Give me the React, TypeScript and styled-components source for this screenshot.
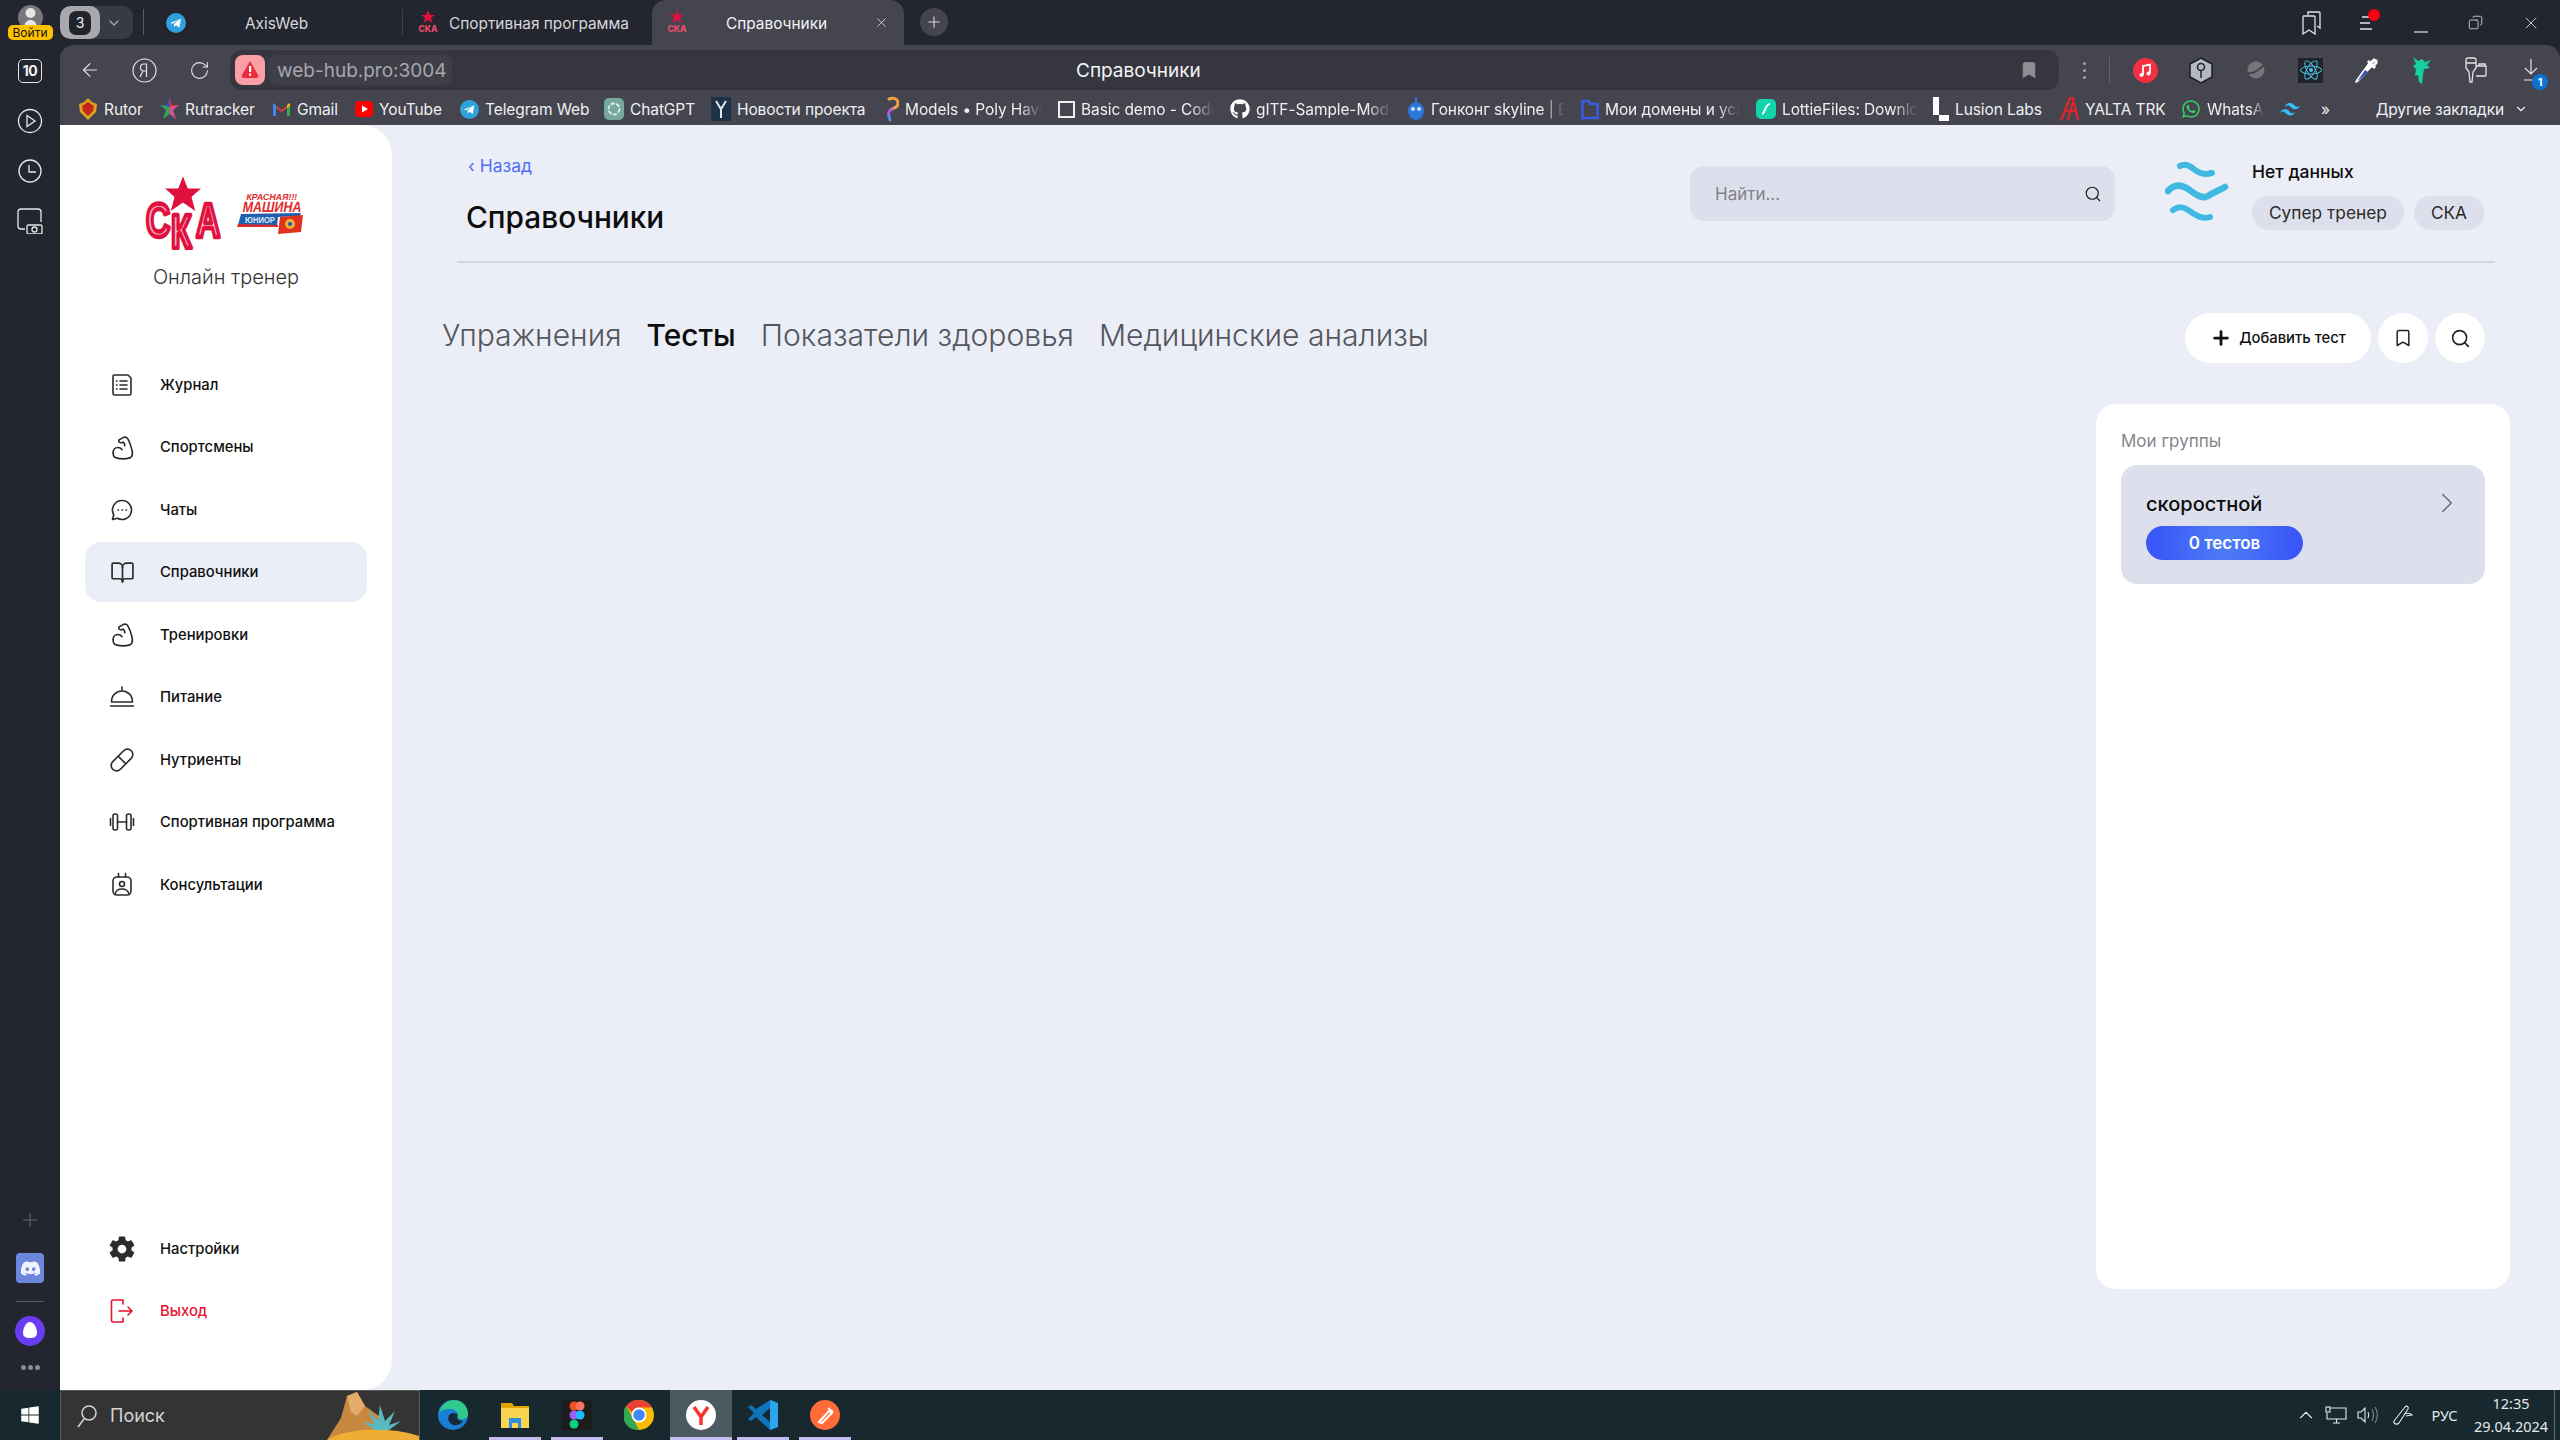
import React from 'react';
import styled, { createGlobalStyle } from 'styled-components';
import { BookOpen, Pill, Search, Plus, ChevronRight, ChevronDown, ChevronUp, X, ArrowLeft, RotateCw, Bookmark, Copy } from 'lucide-react';
import { FaGithub, FaWhatsapp, FaDiscord, FaReact, FaWindows } from 'react-icons/fa';
import { IoSettingsSharp } from 'react-icons/io5';

const GlobalStyle = createGlobalStyle`
  html, body {
    margin: 0;
    width: 2560px;
    height: 1440px;
    overflow: hidden;
    background: #23252f;
    font-family: Inter, "Noto Sans", sans-serif;
  }
  * { box-sizing: border-box; }
  svg { display: block; flex-shrink: 0; }
`;

const Screen = styled.div`
  width: 2560px;
  height: 1440px;
  display: grid;
  grid-template-rows: 1390px 50px;
`;

const Desktop = styled.div`
  display: flex;
  min-height: 0;
`;

/* left browser rail */
const Rail = styled.div`
  width: 60px;
  background: #23252f;
  display: flex;
  flex-direction: column;
  align-items: center;
  padding: 5px 0 20px;
`;

const Avatar = styled.div`
  position: relative;
  width: 25px;
  height: 25px;
  border-radius: 50%;
  background: #77777b;
  display: flex;
  justify-content: center;
  margin-bottom: 28px;
  overflow: visible;
`;

const LoginBadge = styled.span`
  position: absolute;
  left: -10px;
  top: 20px;
  width: 45px;
  height: 15px;
  border-radius: 5px;
  background: #fdc100;
  color: #111;
  font-size: 12px;
  line-height: 15px;
  text-align: center;
`;

const RailButton = styled.div<{ $mb?: number }>`
  width: 26px;
  height: 26px;
  display: flex;
  align-items: center;
  justify-content: center;
  color: #e8e8ea;
  margin-bottom: ${(p) => p.$mb ?? 24}px;
`;

const TenBox = styled.span`
  width: 24px;
  height: 24px;
  border: 1.5px solid #e8e8ea;
  border-radius: 5px;
  color: #f2f2f2;
  font-size: 14px;
  font-weight: 700;
  line-height: 21px;
  text-align: center;
  letter-spacing: -0.5px;
`;

const RailBottom = styled.div`
  margin-top: auto;
  display: flex;
  flex-direction: column;
  align-items: center;
  color: #6f7078;
`;

const DiscordBubble = styled.div`
  position: relative;
  width: 28px;
  height: 30px;
  margin: 22px 0 18px;
  border-radius: 4px;
  background: #6b86da;
  display: flex;
  align-items: center;
  justify-content: center;
  color: #f0f2ff;
`;

const RailRule = styled.div`
  width: 28px;
  height: 1px;
  background: #5a5b63;
  margin: 0 0 14px;
`;

const RailDots = styled.div`
  display: flex;
  gap: 2px;
  margin-top: 19px;

  span {
    width: 5px;
    height: 5px;
    border-radius: 50%;
    background: #8b8c93;
  }
`;

/* browser chrome */
const Browser = styled.div`
  flex: 1;
  min-width: 0;
  display: flex;
  flex-direction: column;
`;

const TabStrip = styled.div`
  height: 45px;
  background: #23252f;
  display: flex;
  align-items: stretch;
  color: #e6e6e8;
`;

const CounterPill = styled.div`
  width: 73px;
  height: 33px;
  margin-top: 6px;
  border-radius: 10px;
  background: #383a44;
  display: flex;
  align-items: center;
  overflow: hidden;
  color: #a9a9ad;
`;

const CounterValue = styled.div`
  width: 40px;
  height: 33px;
  background: #a9a9ad;
  border-radius: 10px;
  display: flex;
  align-items: center;
  justify-content: center;
  margin-right: 6px;

  span {
    width: 22px;
    height: 24px;
    border-radius: 7px;
    background: #22242c;
    color: #f1f1f1;
    font-size: 14px;
    line-height: 24px;
    text-align: center;
  }
`;

const StripRule = styled.div`
  width: 1px;
  height: 26px;
  margin: 9px 6px 0 10px;
  background: #595a62;
`;

const Tab = styled.div<{ $w: number; $active?: boolean; $rule?: boolean }>`
  width: ${(p) => p.$w}px;
  display: flex;
  align-items: center;
  padding-left: ${(p) => (p.$rule ? 16 : 14)}px;
  font-size: 15.4px;
  color: ${(p) => (p.$active ? '#f4f4f5' : '#d7d7da')};
  background: ${(p) => (p.$active ? '#44454f' : 'transparent')};
  border-radius: ${(p) => (p.$active ? '14px 14px 0 0' : '0')};
  white-space: nowrap;
  position: relative;

  &::after {
    content: '';
    display: ${(p) => (p.$rule ? 'block' : 'none')};
    position: absolute;
    right: 0;
    top: 9px;
    width: 1px;
    height: 26px;
    background: #3f4049;
  }
`;

const TabTitle = styled.span<{ $ml: number }>`
  margin-left: ${(p) => p.$ml}px;
  padding-top: 1px;
`;

const TabClose = styled.span`
  margin-left: 47px;
  color: #d0d0d4;
  display: flex;
`;

const NewTab = styled.div`
  width: 28px;
  height: 28px;
  margin: 8px 0 0 16px;
  border-radius: 50%;
  background: #44454f;
  display: flex;
  align-items: center;
  justify-content: center;
  color: #d6d6d9;
`;

const WindowControls = styled.div`
  margin-left: auto;
  padding-right: 2px;
  display: flex;
  align-items: center;
`;

const ChromeButton = styled.div<{ $color?: string }>`
  position: relative;
  width: 55px;
  height: 40px;
  display: flex;
  align-items: center;
  justify-content: center;
  color: ${(p) => p.$color ?? '#e4e4e6'};
`;

const RedDot = styled.span`
  position: absolute;
  left: 30px;
  top: 6px;
  width: 12px;
  height: 12px;
  border-radius: 50%;
  background: #f5000f;
`;

const DownloadBadge = styled.span`
  position: absolute;
  left: 29px;
  top: 24px;
  width: 16px;
  height: 16px;
  border-radius: 50%;
  background: #0b74d1;
  color: #fff;
  font-size: 11px;
  font-weight: 700;
  line-height: 16px;
  text-align: center;
`;

const Toolbar = styled.div`
  height: 45px;
  padding: 5px 2px 0 2px;
  background: #44454f;
  border-radius: 14px 14px 0 0;
  display: flex;
  align-items: center;
`;

const AddressBar = styled.div`
  flex: 1;
  height: 40px;
  margin-left: 3px;
  padding-left: 5px;
  border-radius: 12px;
  background: #353640;
  display: flex;
  align-items: center;
`;

const SecurityBadge = styled.div`
  width: 30px;
  height: 30px;
  border-radius: 8px;
  background: #fb9fa6;
  display: flex;
  align-items: center;
  justify-content: center;
`;

const HostChip = styled.div`
  width: 184px;
  height: 30px;
  margin-left: 3px;
  padding-left: 9px;
  border-radius: 8px;
  background: #3d3e48;
  color: #a7a7ab;
  font-size: 19px;
  line-height: 31px;
  white-space: nowrap;
`;

const PageTitle = styled.div`
  margin-left: 624px;
  padding-top: 1px;
  color: #f3f3f4;
  font-size: 19px;
  white-space: nowrap;
`;

const AddressBookmark = styled.div`
  margin-left: auto;
  margin-right: 20px;
  color: #8d8e93;
`;

const Kebab = styled.div`
  width: 50px;
  display: flex;
  flex-direction: column;
  align-items: center;
  gap: 4px;

  span {
    width: 3px;
    height: 3px;
    border-radius: 50%;
    background: #a2a2a6;
  }
`;

const ToolRule = styled.div`
  width: 1px;
  height: 26px;
  margin-right: 8px;
  background: #62636b;
`;

const BookmarksBar = styled.div`
  height: 35px;
  padding: 3px 0 0 18px;
  background: #44454f;
  display: flex;
  align-items: center;
  color: #f0f0f1;
  font-size: 15.5px;
  letter-spacing: -0.1px;
`;

const BookmarkItem = styled.div<{ $w: number; $fade?: boolean }>`
  width: ${(p) => (p.$fade ? p.$w - 16 : p.$w)}px;
  margin-right: ${(p) => (p.$fade ? 16 : 0)}px;
  display: flex;
  align-items: center;
  gap: 6px;
  white-space: nowrap;
  overflow: hidden;
  ${(p) => p.$fade && 'mask-image: linear-gradient(90deg, #000 85%, transparent 100%);'}
`;

const BookmarksOverflow = styled.span`
  margin-left: 21px;
`;

const MoreBookmarks = styled.div`
  margin-left: auto;
  padding-right: 32px;
  display: flex;
  align-items: center;
  gap: 10px;
  white-space: nowrap;
`;

/* page */
const Page = styled.div`
  flex: 1;
  min-height: 0;
  background: #ebeef7;
  display: flex;
`;

const Sidebar = styled.aside`
  width: 332px;
  padding: 50px 25px 49px;
  background: #fff;
  border-radius: 0 30px 30px 0;
  display: flex;
  flex-direction: column;
`;

const Logos = styled.div`
  display: flex;
  align-items: center;
  gap: 16px;
  height: 75px;
  padding-left: 60px;
`;

const Tagline = styled.div`
  margin: 15px 0 64.5px;
  height: 25px;
  text-align: center;
  color: #333;
  font-size: 20px;
  font-weight: 300;
  line-height: 25px;
`;

const NavList = styled.nav<{ $bottom?: boolean }>`
  display: flex;
  flex-direction: column;
  gap: 2.5px;
  ${(p) => p.$bottom && 'margin-top: auto;'}
`;

const NavItem = styled.div<{ $active?: boolean; $danger?: boolean }>`
  height: 60px;
  padding-left: 23px;
  border-radius: 16px;
  background: ${(p) => (p.$active ? '#ebeef7' : 'transparent')};
  color: ${(p) => (p.$danger ? '#e8112d' : '#111')};
  display: flex;
  align-items: center;
  gap: 24px;
  font-size: 14.8px;
  font-weight: 500;
`;

const NavIcon = styled.span<{ $danger?: boolean }>`
  width: 28px;
  height: 28px;
  display: flex;
  align-items: center;
  justify-content: center;
  color: ${(p) => (p.$danger ? '#e8112d' : '#2b2b2b')};
`;

const Main = styled.main`
  flex: 1;
  min-width: 0;
  padding: 0 50px 101px;
  display: flex;
  flex-direction: column;
`;

const Header = styled.header`
  height: 138px;
  margin: 0 15px;
  padding: 31px 9px 0;
  border-bottom: 2px solid #d5d5d9;
  display: flex;
  align-items: flex-start;
`;

const TitleBlock = styled.div`
  display: flex;
  flex-direction: column;
  gap: 21px;
`;

const BackLink = styled.a`
  padding-left: 2px;
  color: #4f6ef7;
  font-size: 17.5px;
  line-height: 20px;
`;

const Title = styled.h1`
  margin: 0;
  color: #0d0d0d;
  font-size: 29.8px;
  font-weight: 500;
  line-height: 40px;
`;

const SearchBox = styled.div`
  width: 425px;
  height: 55px;
  margin: 10px 0 0 auto;
  padding: 0 13px 0 25px;
  border-radius: 14px;
  background: #dde0ec;
  display: flex;
  align-items: center;
  justify-content: space-between;
  color: #808287;
  font-size: 17px;

  svg {
    color: #222;
  }
`;

const Profile = styled.div`
  width: 371px;
  margin-top: 5px;
  padding-left: 50px;
  display: flex;
  gap: 23px;
`;

const ProfileInfo = styled.div`
  display: flex;
  flex-direction: column;
  gap: 13px;
`;

const ProfileName = styled.div`
  color: #0d0d0d;
  font-size: 17.5px;
  font-weight: 500;
  line-height: 22px;
`;

const ChipRow = styled.div`
  display: flex;
  gap: 10px;
`;

const Chip = styled.span`
  height: 34px;
  padding: 0 17px;
  border-radius: 17px;
  background: #dde0ec;
  color: #2a2a2a;
  font-size: 17.3px;
  line-height: 34px;
  white-space: nowrap;
`;

const ActionRow = styled.div`
  margin-top: 50px;
  padding-right: 25px;
  display: flex;
  align-items: center;
`;

const SectionTabs = styled.div`
  display: flex;
  gap: 25px;
  margin-right: auto;
  padding-bottom: 5px;
`;

const SectionTab = styled.span<{ $active?: boolean }>`
  color: ${(p) => (p.$active ? '#0d0d0d' : '#55565c')};
  font-size: ${(p) => (p.$active ? 29.8 : 30.1)}px;
  font-weight: ${(p) => (p.$active ? 500 : 300)};
  line-height: 45px;
`;

const AddButton = styled.button`
  width: 186px;
  height: 50px;
  border: 0;
  border-radius: 25px;
  background: #fff;
  color: #111;
  display: flex;
  align-items: center;
  justify-content: center;
  gap: 7px;
  font-family: inherit;
  font-size: 14.8px;
  font-weight: 500;
`;

const RoundButton = styled.button`
  width: 50px;
  height: 50px;
  margin-left: 7px;
  padding: 0;
  border: 0;
  border-radius: 50%;
  background: #fff;
  color: #222;
  display: flex;
  align-items: center;
  justify-content: center;
`;

const ContentRow = styled.div`
  flex: 1;
  min-height: 0;
  margin-top: 41px;
  display: flex;
  justify-content: flex-end;
`;

const GroupsCard = styled.section`
  width: 414px;
  padding: 25px;
  border-radius: 20px;
  background: #fff;
`;

const GroupsTitle = styled.div`
  color: #85868b;
  font-size: 17px;
  line-height: 24px;
  margin-bottom: 12px;
`;

const GroupCard = styled.div`
  position: relative;
  height: 119px;
  padding: 24px 25px 0;
  border-radius: 16px;
  background: #dde0ec;
`;

const GroupName = styled.div`
  color: #0d0d0d;
  font-size: 20px;
  font-weight: 500;
  line-height: 30px;
  margin-bottom: 7px;
`;

const GroupChevron = styled.span`
  position: absolute;
  right: 21px;
  top: 21px;
  color: #6c6d75;
`;

const CountPill = styled.div`
  width: 157px;
  height: 34px;
  border-radius: 17px;
  background: radial-gradient(circle at 50% 50%, #4f80f6 0%, #3a57f8 85%);
  color: #fff;
  font-size: 17px;
  font-weight: 600;
  line-height: 34px;
  text-align: center;
`;

/* windows taskbar */
const Taskbar = styled.footer`
  background: #18282f;
  display: flex;
  align-items: stretch;
`;

const StartButton = styled.div`
  width: 60px;
  display: flex;
  align-items: center;
  justify-content: center;
  color: #fff;
`;

const TaskSearch = styled.div`
  position: relative;
  width: 360px;
  margin-right: 1px;
  padding-left: 15px;
  border: 1px solid #5a5a5a;
  border-width: 1px 1px 0;
  background: #343434;
  display: flex;
  align-items: center;
  gap: 12px;
  color: #d5d5d5;
  font-size: 18px;
  overflow: hidden;
`;

const Desert = styled.svg`
  position: absolute;
  right: 0;
  bottom: 0;
`;

const TaskApps = styled.div`
  display: flex;
  padding-left: 1px;
`;

const TaskApp = styled.div<{ $active?: boolean; $open?: boolean }>`
  position: relative;
  width: 62px;
  display: flex;
  align-items: center;
  justify-content: center;
  background: ${(p) => (p.$active ? '#4a5a60' : 'transparent')};

  &::after {
    content: '';
    display: ${(p) => (p.$open ? 'block' : 'none')};
    position: absolute;
    left: ${(p) => (p.$active ? 0 : 5)}px;
    right: ${(p) => (p.$active ? 0 : 5)}px;
    bottom: 0;
    height: 3px;
    background: #c4bcee;
  }
`;

const Tray = styled.div`
  margin-left: auto;
  display: flex;
  align-items: center;
  color: #e6e9ea;
  font-family: "Noto Sans", sans-serif;
`;

const TrayIcon = styled.span<{ $w: number }>`
  width: ${(p) => p.$w}px;
  display: flex;
  justify-content: center;
`;

const TrayLang = styled.span`
  width: 47px;
  text-align: center;
  font-size: 14.5px;
`;

const Clock = styled.div`
  width: 86px;
  text-align: center;
  font-size: 14.5px;
  line-height: 23px;
`;

const ShowDesktop = styled.div`
  width: 1px;
  height: 50px;
  margin-right: 5px;
  background: #5d6a6f;
`;

/* drawings */
const SkaFavicon = () => (
  <svg width="22" height="26" viewBox="0 0 22 26">
    <polygon points="11,0 13,5 18,5 14,8 15.500,13 11,10 6.500,13 8,8 4,5 9,5" fill="#e0103f" />
    <text x="11" y="22" textAnchor="middle" fontSize="8.500" fontWeight="800" fill="#f04a6a" fontFamily="Inter">СКА</text>
  </svg>
);

const TelegramIcon = ({ size = 20 }: { size?: number }) => (
  <svg width={size} height={size} viewBox="0 0 24 24">
    <circle cx="12" cy="12" r="12" fill="#2fa2dc" />
    <path d="M5 12l13-5.200-2 11-4-3-2.200 2.100-.3-3.400 6-5.400-7.700 4.900z" fill="#fff" />
  </svg>
);

const SkaLogo = () => (
  <svg width="76" height="75" viewBox="0 0 76 75">
    <g fontFamily="Liberation Sans" fontWeight="700" fontSize="48" fill="#f9b6c4" stroke="#e0103f" strokeWidth="4.500" strokeLinejoin="round">
      <text transform="translate(1 62) scale(.7 1)">С</text>
      <text transform="translate(26 73) scale(.7 1)">К</text>
      <text transform="translate(51 62) scale(.7 1)">А</text>
    </g>
    <polygon points="38,0 43,13 57,13 47,22 51,37 38,28 25,37 29,22 19,13 33,13" fill="#e0103f" stroke="#fff" strokeWidth="1" />
  </svg>
);

const RedMachineLogo = () => (
  <svg width="66" height="44" viewBox="0 0 66 44">
    <g fontFamily="Liberation Sans" fontWeight="700" fill="#e02b2b">
      <text transform="translate(9 9) skewX(-10)" fontSize="8.800">КРАСНАЯ!!!</text>
      <text transform="translate(5 21) skewX(-10) scale(.83 1)" fontSize="15">МАШИНА</text>
    </g>
    <polygon points="4,23 64,22 63,25 41,26 40,35 1,34" fill="#1f5fae" />
    <polygon points="0,36 1,33 41,34 41,36" fill="#e02b2b" />
    <text transform="translate(8 32) scale(.85 1)" fontFamily="Liberation Sans" fontSize="9" fontWeight="700" fill="#dfe9f6">ЮНИОР</text>
    <polygon points="43,26 66,24 64,41 41,43" fill="#e2321d" />
    <circle cx="53" cy="33" r="5" fill="#e8b23b" />
    <circle cx="53" cy="33" r="2" fill="#2456a6" />
  </svg>
);

const Waves = () => (
  <svg width="64" height="62" viewBox="0 0 64 62" fill="none" stroke="#3fb9e0" strokeLinecap="round">
    <path d="M15 5c6-3 10 0 15 4s10 5 17 3" strokeWidth="6" />
    <path d="M3 30c7-8 14-6 20-2s14 11 20 7 10-5 17-9" strokeWidth="6.500" />
    <path d="M8 49c6-4 10-3 15 0s12 10 22 7" strokeWidth="6" />
  </svg>
);

const stroke = { fill: 'none', stroke: 'currentColor', strokeWidth: 1.6, strokeLinecap: 'round' as const, strokeLinejoin: 'round' as const };

const JournalIcon = () => (
  <svg width="24" height="24" viewBox="0 0 24 24" {...stroke}>
    <path d="M4 2h14l3 3v15.500a1.500 1.500 0 0 1-1.500 1.500h-15a1.500 1.500 0 0 1-1.500-1.500v-17a1.500 1.500 0 0 1 1-1.500z" />
    <path d="M10 8h7M10 12h7M10 16h7M6.500 8h.5M6.500 12h.5M6.500 16h.5" />
  </svg>
);

const MuscleIcon = () => (
  <svg width="25" height="25" viewBox="0 0 24 24" {...stroke}>
    <path d="M3 17c0-3 2-5 4.500-5 1.500 0 3 .7 4 2" />
    <path d="M3 17c0 3 1 4.500 3 5 4 1.200 9 1.200 13 0 2.500-1 3-4 2-8-1-4-2.500-8-4-10.500-1-1.500-3-1.800-4.500-1l-3.500 2c-.8.600-.8 2 .2 2.600.8.500 2 .4 3.500-.2 1 .8 1.500 2 1.500 3.500" />
  </svg>
);

const ClocheIcon = () => (
  <svg width="26" height="24" viewBox="0 0 26 24" {...stroke}>
    <path d="M13 2v3M2.500 17c0-7 5-11 10.500-11s10.500 4 10.500 11zM1.500 21h23" />
  </svg>
);

const DumbbellIcon = () => (
  <svg width="26" height="22" viewBox="0 0 26 22" {...stroke}>
    <rect x="4" y="3" width="4.500" height="16" rx="2" />
    <rect x="17.500" y="3" width="4.500" height="16" rx="2" />
    <path d="M8.500 11h9M1.500 7.500v7M24.500 7.500v7" />
  </svg>
);

const ConsultIcon = () => (
  <svg width="22" height="26" viewBox="0 0 22 26" {...stroke}>
    <rect x="2" y="5" width="18" height="18" rx="4" />
    <circle cx="11" cy="12" r="2.500" />
    <path d="M4 22c1-4 4-5 7-5s6 1 7 5M7.500 1.500V5M14.500 1.500V5" />
  </svg>
);

const ExitIcon = () => (
  <svg width="24" height="26" viewBox="0 0 24 26" {...stroke}>
    <path d="M13 6V2H3a1.500 1.500 0 0 0-1.500 1.500v19A1.500 1.500 0 0 0 3 24h10v-4M9 13h13M18 9l4 4-4 4" />
  </svg>
);

const navMain = [
  { label: 'Журнал', icon: <JournalIcon /> },
  { label: 'Спортсмены', icon: <MuscleIcon /> },
  { label: 'Чаты', icon: (
    <svg width="24" height="24" viewBox="0 0 24 24" {...stroke}>
      <path d="M12 2.500a9.500 9.500 0 1 1-4.600 17.800L2.500 21.500l1.300-4.700A9.500 9.500 0 0 1 12 2.500z" />
      <path d="M8 12h.5M12 12h.5M16 12h.5" />
    </svg>
  ) },
  { label: 'Справочники', icon: <BookOpen size={25} strokeWidth={1.6} />, active: true },
  { label: 'Тренировки', icon: <MuscleIcon /> },
  { label: 'Питание', icon: <ClocheIcon /> },
  { label: 'Нутриенты', icon: <Pill size={26} strokeWidth={1.5} /> },
  { label: 'Спортивная программа', icon: <DumbbellIcon /> },
  { label: 'Консультации', icon: <ConsultIcon /> },
];

const bookmarks: { label: string; w: number; fade?: boolean; icon: React.ReactNode }[] = [
  { label: 'Rutor', w: 82, icon: (
    <svg width="20" height="22" viewBox="0 0 20 22"><path d="M10 0l4 4 5 2-1 8-8 8-8-8-1-8 5-2z" fill="#d9a21e" /><path d="M10 4l6 4-1 5-5 5-5-5-1-5z" fill="#c3261d" /></svg>
  ) },
  { label: 'Rutracker', w: 112, icon: (
    <svg width="19" height="24" viewBox="0 0 19 24"><polygon points="9.500,0 12,8 19,8 13,13 9.500,10" fill="#d6342c" /><polygon points="9.500,0 7,8 0,8 6,13 9.500,10" fill="#3557c4" /><polygon points="0,8 6,13 3,22 9.500,17 9.500,10" fill="#2fa84f" /><polygon points="19,8 13,13 16,22 9.500,17 9.500,10" fill="#d94fa0" /></svg>
  ) },
  { label: 'Gmail', w: 83, icon: (
    <svg width="19" height="16" viewBox="0 0 19 16"><path d="M1 15V3l8.500 6L18 3v12h-3V7l-5.500 4L4 7v8z" fill="#ea4335" /><path d="M1 15V2l3 2v11z" fill="#4285f4" /><path d="M15 15V4l3-2v13z" fill="#34a853" /><path d="M15 4l3-2v3l-3 2z" fill="#fbbc04" /></svg>
  ) },
  { label: 'YouTube', w: 105, icon: (
    <svg width="18" height="18" viewBox="0 0 18 18"><rect y="1" width="18" height="16" rx="4" fill="#f00" /><polygon points="7,5.500 13,9 7,12.500" fill="#fff" /></svg>
  ) },
  { label: 'Telegram Web', w: 144, icon: <TelegramIcon size={19} /> },
  { label: 'ChatGPT', w: 107, icon: (
    <svg width="20" height="22" viewBox="0 0 20 22"><rect width="20" height="22" rx="5" fill="#75a99c" /><circle cx="10" cy="11" r="5.500" fill="none" stroke="#e6f0ee" strokeWidth="1.800" strokeDasharray="4 1.500" /></svg>
  ) },
  { label: 'Новости проекта', w: 174, icon: (
    <svg width="20" height="24" viewBox="0 0 20 24"><rect width="20" height="24" fill="#1d3247" /><path d="M5 4l5 8 5-8M10 12v9" stroke="#dfe6ec" strokeWidth="2" fill="none" /></svg>
  ) },
  { label: 'Models • Poly Haven', w: 173, fade: true, icon: (
    <svg width="14" height="26" viewBox="0 0 14 26" fill="none" strokeWidth="3" strokeLinecap="round"><path d="M4 3c5-2 9 0 9 4s-3 5-6 6" stroke="#f0a03c" /><path d="M7 13c-3 1-4 4-3 7" stroke="#b45ad8" /><path d="M4 20l1 4" stroke="#4b8ff0" /></svg>
  ) },
  { label: 'Basic demo - Code', w: 172, fade: true, icon: (
    <svg width="17" height="17" viewBox="0 0 17 17"><rect x="1" y="1" width="15" height="15" fill="none" stroke="#f0f0f1" strokeWidth="2" /></svg>
  ) },
  { label: 'gITF-Sample-Models', w: 177, fade: true, icon: <FaGithub size={20} color="#fff" /> },
  { label: 'Гонконг skyline | Блог', w: 174, fade: true, icon: (
    <svg width="18" height="24" viewBox="0 0 18 24"><path d="M9 0v5" stroke="#2a77d8" strokeWidth="2" /><ellipse cx="9" cy="14" rx="8" ry="9" fill="#2a77d8" /><circle cx="6" cy="12" r="2" fill="#cfe3ff" /><circle cx="12" cy="12" r="2" fill="#cfe3ff" /></svg>
  ) },
  { label: 'Мои домены и услуги', w: 175, fade: true, icon: (
    <svg width="18" height="22" viewBox="0 0 18 22"><path d="M1.500 20V3h6l2 3h7v14z" fill="none" stroke="#3a5be8" strokeWidth="2.500" /></svg>
  ) },
  { label: 'LottieFiles: Download', w: 177, fade: true, icon: (
    <svg width="20" height="20" viewBox="0 0 20 20"><rect width="20" height="20" rx="5" fill="#10d4ac" /><path d="M6 15c3 0 3-10 8-10" fill="none" stroke="#fff" strokeWidth="2" /></svg>
  ) },
  { label: 'Lusion Labs', w: 127, icon: (
    <svg width="16" height="24" viewBox="0 0 16 24"><rect width="6" height="18" fill="#fff" /><rect x="6" y="18" width="10" height="6" fill="#fff" /></svg>
  ) },
  { label: 'YALTA TRK', w: 121, icon: (
    <svg width="19" height="24" viewBox="0 0 19 24"><path d="M1 23L10 1h3l5 22M6 14h10M8 23l5-18" fill="none" stroke="#d6282c" strokeWidth="2.500" /></svg>
  ) },
  { label: 'WhatsApp', w: 99, fade: true, icon: <FaWhatsapp size={20} color="#37d366" /> },
];

const TailwindIcon = () => (
  <svg width="20" height="13" viewBox="0 0 20 13" fill="#38bdf8">
    <path d="M10 0C7.300 0 5.700 1.300 5 4c1-1.300 2.200-1.800 3.500-1.500.8.200 1.300.7 2 1.400C11.600 5 12.800 6.200 15 6.200c2.700 0 4.300-1.300 5-4-1 1.300-2.200 1.800-3.500 1.500-.8-.2-1.300-.7-2-1.400C13.400 1.200 12.200 0 10 0zM5 6.200c-2.700 0-4.300 1.300-5 4 1-1.300 2.200-1.800 3.500-1.500.8.200 1.300.7 2 1.400C6.600 11.200 7.800 12.400 10 12.400c2.700 0 4.300-1.300 5-4-1 1.300-2.200 1.800-3.500 1.500-.8-.2-1.300-.7-2-1.400C8.400 7.400 7.200 6.200 5 6.200z" />
  </svg>
);

const taskApps: { key: string; open?: boolean; active?: boolean; icon: React.ReactNode }[] = [
  { key: 'edge', icon: (
    <svg width="30" height="30" viewBox="0 0 30 30"><circle cx="15" cy="15" r="15" fill="#1a7fd4" /><path d="M1 13C3 4 10 0 16 0c8 0 14 6 14 14 0 4-4 6-8 5-3-1-3-3-2-5-1-3-4-5-8-5-5 0-9 1-11 4z" fill="#32c98c" /><path d="M12 14c3-2 7-1 8 1-2 3 0 6 5 6-2 3-6 5-10 4-5-2-6-8-3-11z" fill="#18283a" /></svg>
  ) },
  { key: 'explorer', open: true, icon: (
    <svg width="28" height="28" viewBox="0 0 28 28"><path d="M0 2h11l2 3h15v4H0z" fill="#e2a400" /><rect y="7" width="28" height="20" fill="#fbd54f" /><rect x="8" y="17" width="12" height="10" fill="#2e8fe6" /><rect x="11" y="22" width="6" height="5" fill="#fbd54f" /></svg>
  ) },
  { key: 'figma', open: true, icon: (
    <svg width="30" height="30" viewBox="0 0 30 30"><rect width="30" height="30" rx="2" fill="#1c1c1c" /><circle cx="12" cy="6" r="4.500" fill="#f24e1e" /><circle cx="18" cy="6" r="4.500" fill="#ff7262" /><circle cx="12" cy="15" r="4.500" fill="#a259ff" /><circle cx="18" cy="15" r="4.500" fill="#1abcfe" /><circle cx="12" cy="24" r="4.500" fill="#0acf83" /></svg>
  ) },
  { key: 'chrome', icon: (
    <svg width="30" height="30" viewBox="0 0 30 30"><circle cx="15" cy="15" r="15" fill="#fbbc04" /><path d="M15 0a15 15 0 0 1 13 7.500H15a7.500 7.500 0 0 0-7 4.700L2 6A15 15 0 0 1 15 0z" fill="#ea4335" /><path d="M2 6l7 12 6 12A15 15 0 0 1 2 6z" fill="#34a853" /><circle cx="15" cy="15" r="7.500" fill="#fff" /><circle cx="15" cy="15" r="5.800" fill="#4285f4" /></svg>
  ) },
  { key: 'yandex', open: true, active: true, icon: (
    <svg width="30" height="30" viewBox="0 0 30 30"><circle cx="15" cy="15" r="15" fill="#fff" /><path d="M8 7l7 10 7-10M15 17v8" fill="none" stroke="#f9342a" strokeWidth="3.500" /></svg>
  ) },
  { key: 'vscode', open: true, icon: (
    <svg width="30" height="30" viewBox="0 0 30 30"><path d="M22 0l8 3v24l-8 3-14-13-5 4-3-2 6-6-6-6 3-2 5 4z" fill="#0e75bb" /><path d="M22 8l-8 7 8 7z" fill="#18282f" /><path d="M22 0l8 3v24l-8 3z" fill="#2ba5ec" /></svg>
  ) },
  { key: 'postman', open: true, icon: (
    <svg width="30" height="30" viewBox="0 0 30 30"><circle cx="15" cy="15" r="15" fill="#ff6c37" /><path d="M9 22l10-11 3 2-10 10zM18 8l5 4" stroke="#fff" strokeWidth="2" fill="none" /></svg>
  ) },
];

export default function App() {
  return (
    <>
      <GlobalStyle />
      <Screen>
        <Desktop>
          <Rail>
            <Avatar>
              <svg width="25" height="25" viewBox="0 0 25 25" fill="#e6e6e6"><circle cx="12.500" cy="8" r="5" /><path d="M6 22c1-5 3-7 6.500-7s5.500 2 6.500 7z" /></svg>
              <LoginBadge>Войти</LoginBadge>
            </Avatar>
            <RailButton><TenBox>10</TenBox></RailButton>
            <RailButton>
              <svg width="26" height="26" viewBox="0 0 26 26" fill="none" stroke="currentColor" strokeWidth="1.300"><circle cx="13" cy="13" r="11.500" /><path d="M10 7.500l8 5.500-8 5.500z" /></svg>
            </RailButton>
            <RailButton $mb={24}>
              <svg width="26" height="26" viewBox="0 0 26 26" fill="none" stroke="currentColor" strokeWidth="1.300"><circle cx="13" cy="13" r="11" /><path d="M12 7v7h7" /></svg>
            </RailButton>
            <RailButton>
              <svg width="26" height="26" viewBox="0 0 26 26" fill="none" stroke="currentColor" strokeWidth="1.300"><path d="M1 18V4a3 3 0 0 1 3-3h17a3 3 0 0 1 3 3v10M1 18a3 3 0 0 0 3 3h4" /><rect x="10" y="17" width="15" height="9" rx="1.500" /><circle cx="17.500" cy="21.500" r="2.500" /></svg>
            </RailButton>
            <RailBottom>
              <Plus size={22} strokeWidth={1} />
              <DiscordBubble><FaDiscord size={21} /></DiscordBubble>
              <RailRule />
              <svg width="30" height="30" viewBox="0 0 30 30"><circle cx="15" cy="15" r="15" fill="#6a3df0" /><path d="M15 6c4 0 7 6 7 11 0 4-3 5-7 5s-7-1-7-5c0-5 3-11 7-11z" fill="#fff" /></svg>
              <RailDots><span /><span /><span /></RailDots>
            </RailBottom>
          </Rail>

          <Browser>
            <TabStrip>
              <CounterPill>
                <CounterValue><span>3</span></CounterValue>
                <ChevronDown size={16} />
              </CounterPill>
              <StripRule />
              <Tab $w={253} $rule>
                <TelegramIcon />
                <TabTitle $ml={59}>AxisWeb</TabTitle>
              </Tab>
              <Tab $w={249}>
                <SkaFavicon />
                <TabTitle $ml={10}>Спортивная программа</TabTitle>
              </Tab>
              <Tab $w={252} $active>
                <SkaFavicon />
                <TabTitle $ml={38}>Справочники</TabTitle>
                <TabClose><X size={15} strokeWidth={1.500} /></TabClose>
              </Tab>
              <NewTab><Plus size={18} strokeWidth={1.500} /></NewTab>
              <WindowControls>
                <ChromeButton>
                  <svg width="20" height="24" viewBox="0 0 20 24" fill="none" stroke="currentColor" strokeWidth="1.300"><path d="M7 4V1h11a1 1 0 0 1 1 1v15l-3-2" /><path d="M2 5h11a1 1 0 0 1 1 1v17l-6-4-6 4V6a1 1 0 0 1 1-1z" /></svg>
                </ChromeButton>
                <ChromeButton>
                  <svg width="14" height="16" viewBox="0 0 14 16" fill="none" stroke="currentColor" strokeWidth="1.300"><path d="M3 2h9M1 8h10M1 14h12" /></svg>
                  <RedDot />
                </ChromeButton>
                <ChromeButton>
                  <svg width="14" height="2" viewBox="0 0 14 2" style={{ marginTop: 18 }}><path d="M0 1h14" stroke="currentColor" strokeWidth="1.200" /></svg>
                </ChromeButton>
                <ChromeButton><Copy size={15} strokeWidth={1.300} style={{ transform: 'scaleX(-1)' }} /></ChromeButton>
                <ChromeButton><X size={20} strokeWidth={1} /></ChromeButton>
              </WindowControls>
            </TabStrip>

            <Toolbar>
              <ChromeButton><ArrowLeft size={22} strokeWidth={1.200} /></ChromeButton>
              <ChromeButton>
                <svg width="25" height="25" viewBox="0 0 25 25" fill="none" stroke="currentColor" strokeWidth="1.200"><circle cx="12.500" cy="12.500" r="11.500" /><path d="M14.500 19V6h-2.500a3.500 3.500 0 0 0 0 7h2.500M11 13l-3 6" /></svg>
              </ChromeButton>
              <ChromeButton><RotateCw size={21} strokeWidth={1.200} /></ChromeButton>
              <AddressBar>
                <SecurityBadge>
                  <svg width="18" height="20" viewBox="0 0 18 20"><path d="M9 1l8 14a2 2 0 0 1-2 3H3a2 2 0 0 1-2-3z" fill="#ea2c3a" /><rect x="8" y="6" width="2.200" height="6" fill="#fff" /><rect x="8" y="13.500" width="2.200" height="2.200" fill="#fff" /></svg>
                </SecurityBadge>
                <HostChip>web-hub.pro:3004</HostChip>
                <PageTitle>Справочники</PageTitle>
                <AddressBookmark><Bookmark size={20} fill="currentColor" strokeWidth={1} /></AddressBookmark>
              </AddressBar>
              <Kebab><span /><span /><span /></Kebab>
              <ToolRule />
              <ChromeButton>
                <svg width="25" height="25" viewBox="0 0 25 25"><circle cx="12.500" cy="12.500" r="12.500" fill="#f42f42" /><path d="M10 17V8l7-1.500V15" fill="none" stroke="#fff" strokeWidth="1.800" /><circle cx="8.500" cy="17" r="2" fill="#fff" /><circle cx="15.500" cy="15.500" r="2" fill="#fff" /></svg>
              </ChromeButton>
              <ChromeButton>
                <svg width="24" height="27" viewBox="0 0 24 27"><polygon points="12,1 23,7 23,20 12,26 1,20 1,7" fill="#b3b8c4" stroke="#1d1e24" strokeWidth="1.500" /><circle cx="12" cy="10" r="3.500" fill="none" stroke="#23252c" strokeWidth="1.500" /><path d="M12 13v8" stroke="#23252c" strokeWidth="1.500" /></svg>
              </ChromeButton>
              <ChromeButton>
                <svg width="20" height="20" viewBox="0 0 20 20"><circle cx="10" cy="10" r="8.500" fill="#75767a" /><path d="M2 13c5 1 11-3 16-8" stroke="#44454f" strokeWidth="2" fill="none" /></svg>
              </ChromeButton>
              <ChromeButton>
                <svg width="25" height="25" viewBox="0 0 25 25"><rect width="25" height="25" fill="#20232a" /></svg>
                <FaReact size={22} color="#4cc3e6" style={{ position: 'absolute' }} />
              </ChromeButton>
              <ChromeButton>
                <svg width="26" height="28" viewBox="0 0 26 28" fill="none"><path d="M16 6L3 24l-1 3 3-1L20 10z" fill="#fff" /><path d="M12 14L5 24l-1 1 2-1 9-8z" fill="#3f53cc" /><path d="M15 5l7 7M18 7l3-3 2 1 0 2-3 3" stroke="#fff" strokeWidth="3" /></svg>
              </ChromeButton>
              <ChromeButton>
                <svg width="22" height="30" viewBox="0 0 22 30"><path d="M3 2l5 4 4-2 3 3 6-2-4 5 3 3-6 1-1 6-1 9-3-2-1-7-3 1 1-7-3-3 3-2z" fill="#15cfa0" /></svg>
              </ChromeButton>
              <ChromeButton>
                <svg width="22" height="26" viewBox="0 0 22 26" fill="none" stroke="currentColor" strokeWidth="1.300"><path d="M5 25l-1-10-3-4V3a2 2 0 0 1 2-2h6a2 2 0 0 1 2 2v8l-3 4-1 10z" /><path d="M1 6h10M11 9h10v9a1 1 0 0 1-1 1h-9M14 9V7h6v2" /></svg>
              </ChromeButton>
              <ChromeButton>
                <svg width="16" height="24" viewBox="0 0 16 24" fill="none" stroke="currentColor" strokeWidth="1.200"><path d="M8 1v15M2 10l6 6 6-6M1 22h12" /></svg>
                <DownloadBadge>1</DownloadBadge>
              </ChromeButton>
            </Toolbar>

            <BookmarksBar>
              {bookmarks.map((b) => (
                <BookmarkItem key={b.label} $w={b.w} $fade={b.fade}>
                  {b.icon}
                  <span>{b.label}</span>
                </BookmarkItem>
              ))}
              <TailwindIcon />
              <BookmarksOverflow>»</BookmarksOverflow>
              <MoreBookmarks>
                Другие закладки
                <ChevronDown size={14} />
              </MoreBookmarks>
            </BookmarksBar>

            <Page>
              <Sidebar>
                <Logos>
                  <SkaLogo />
                  <RedMachineLogo />
                </Logos>
                <Tagline>Онлайн тренер</Tagline>
                <NavList>
                  {navMain.map((item) => (
                    <NavItem key={item.label} $active={item.active}>
                      <NavIcon>{item.icon}</NavIcon>
                      {item.label}
                    </NavItem>
                  ))}
                </NavList>
                <NavList $bottom>
                  <NavItem>
                    <NavIcon><IoSettingsSharp size={28} /></NavIcon>
                    Настройки
                  </NavItem>
                  <NavItem $danger>
                    <NavIcon $danger><ExitIcon /></NavIcon>
                    Выход
                  </NavItem>
                </NavList>
              </Sidebar>

              <Main>
                <Header>
                  <TitleBlock>
                    <BackLink>‹ Назад</BackLink>
                    <Title>Справочники</Title>
                  </TitleBlock>
                  <SearchBox>
                    Найти...
                    <Search size={18} strokeWidth={1.600} />
                  </SearchBox>
                  <Profile>
                    <Waves />
                    <ProfileInfo>
                      <ProfileName>Нет данных</ProfileName>
                      <ChipRow>
                        <Chip>Супер тренер</Chip>
                        <Chip>СКА</Chip>
                      </ChipRow>
                    </ProfileInfo>
                  </Profile>
                </Header>

                <ActionRow>
                  <SectionTabs>
                    <SectionTab>Упражнения</SectionTab>
                    <SectionTab $active>Тесты</SectionTab>
                    <SectionTab>Показатели здоровья</SectionTab>
                    <SectionTab>Медицинские анализы</SectionTab>
                  </SectionTabs>
                  <AddButton>
                    <Plus size={22} strokeWidth={3} />
                    Добавить тест
                  </AddButton>
                  <RoundButton><Bookmark size={20} strokeWidth={1.800} /></RoundButton>
                  <RoundButton><Search size={21} strokeWidth={1.800} /></RoundButton>
                </ActionRow>

                <ContentRow>
                  <GroupsCard>
                    <GroupsTitle>Мои группы</GroupsTitle>
                    <GroupCard>
                      <GroupName>скоростной</GroupName>
                      <GroupChevron><ChevronRight size={34} strokeWidth={1.100} /></GroupChevron>
                      <CountPill>0 тестов</CountPill>
                    </GroupCard>
                  </GroupsCard>
                </ContentRow>
              </Main>
            </Page>
          </Browser>
        </Desktop>

        <Taskbar>
          <StartButton><FaWindows size={20} /></StartButton>
          <TaskSearch>
            <svg width="22" height="24" viewBox="0 0 22 24" fill="none" stroke="currentColor" strokeWidth="1.500"><circle cx="13" cy="9" r="7" /><path d="M8 15l-6 8" /></svg>
            Поиск
            <Desert width="92" height="50" viewBox="0 0 92 50">
              <path d="M0 50L14 28l6-22 10-4 8 14 14 10 8 24z" fill="#c8873f" />
              <path d="M20 6l10-4 8 14-8 10-6-4z" fill="#e3ac6b" />
              <path d="M0 50c20-12 60-14 92-4v4z" fill="#eeae33" />
              <path d="M48 40l-12-8 11 2-6-14 10 11 2-16 5 16 10-10-6 14 12-4-12 9z" fill="#58b9bf" />
            </Desert>
          </TaskSearch>
          <TaskApps>
            {taskApps.map((app) => (
              <TaskApp key={app.key} $active={app.active} $open={app.open}>{app.icon}</TaskApp>
            ))}
          </TaskApps>
          <Tray>
            <TrayIcon $w={30}><ChevronUp size={22} strokeWidth={1.200} /></TrayIcon>
            <TrayIcon $w={30}>
              <svg width="22" height="18" viewBox="0 0 22 18" fill="none" stroke="currentColor" strokeWidth="1.100"><path d="M5 2h16v11H2V7M8 17h7M11.500 13v4" /><rect x="1" y="1" width="4" height="5" /></svg>
            </TrayIcon>
            <TrayIcon $w={34}>
              <svg width="22" height="18" viewBox="0 0 22 18" fill="none" stroke="currentColor" strokeWidth="1.100"><path d="M1 6v6h3l4 4V2L4 6zM11 6c1 2 1 4 0 6" /><path d="M15 3c2 4 2 8 0 12M18 1c3 5 3 11 0 16" stroke="#7b868a" /></svg>
            </TrayIcon>
            <TrayIcon $w={36}>
              <svg width="22" height="22" viewBox="0 0 22 22" fill="none" stroke="currentColor" strokeWidth="1.100"><path d="M2 17L13 3c2-2 4 0 3 2L7 19c-2 2-6 1-5-2zM12 10c3-1 6-1 8 1l-6 1" /></svg>
            </TrayIcon>
            <TrayLang>РУС</TrayLang>
            <Clock>12:35<br />29.04.2024</Clock>
            <ShowDesktop />
          </Tray>
        </Taskbar>
      </Screen>
    </>
  );
}
